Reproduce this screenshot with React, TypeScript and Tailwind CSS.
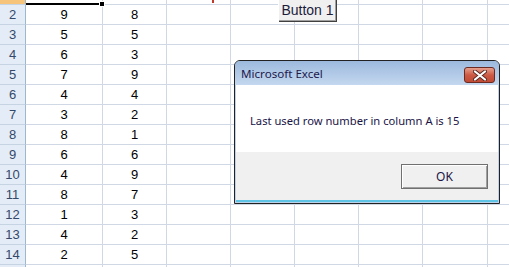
import React from "react";

const data: [number, number, number][] = [
  [2, 9, 8],
  [3, 5, 5],
  [4, 6, 3],
  [5, 7, 9],
  [6, 4, 4],
  [7, 3, 2],
  [8, 8, 1],
  [9, 6, 6],
  [10, 4, 9],
  [11, 8, 7],
  [12, 1, 3],
  [13, 4, 2],
  [14, 2, 5],
];

function EmptyCells() {
  return (
    <>
      <div className="w-[64px] shrink-0 border-r border-b border-[#d0d7e5]" />
      <div className="w-[64px] shrink-0 border-r border-b border-[#d0d7e5]" />
      <div className="w-[64px] shrink-0 border-r border-b border-[#d0d7e5]" />
      <div className="w-[64px] shrink-0 border-r border-b border-[#d0d7e5]" />
      <div className="w-[65px] shrink-0 border-r border-b border-[#d0d7e5]" />
      <div className="flex-1 border-b border-[#d0d7e5]" />
    </>
  );
}

export default function App() {
  return (
    <div
      className="relative w-[509px] h-[267px] overflow-hidden bg-white text-[12px] text-black"
      style={{ fontFamily: '"Liberation Sans", Arial, sans-serif' }}
    >
      {/* Row 1 (mostly scrolled off) */}
      <div className="flex h-[5px]">
        <div className="w-[26px] shrink-0 bg-[#f7c47c] border-r border-b border-r-[#9eb6ce] border-b-[#c6d3e3]" />
        <div className="w-[77px] shrink-0 border-r border-[#d0d7e5] border-b-2 border-b-black" />
        <div className="w-[64px] shrink-0 border-r border-b border-[#d0d7e5]" />
        <div className="w-[64px] shrink-0 border-r border-b border-[#d0d7e5] flex">
          <div className="ml-[45px] w-[2px] h-[3px] bg-[#c0392b]" />
        </div>
        <div className="w-[64px] shrink-0 border-r border-b border-[#d0d7e5]" />
        <div className="w-[64px] shrink-0 border-r border-b border-[#d0d7e5]" />
        <div className="w-[64px] shrink-0 border-r border-b border-[#d0d7e5]" />
        <div className="w-[65px] shrink-0 border-r border-b border-[#d0d7e5]" />
        <div className="flex-1 border-b border-[#d0d7e5]" />
      </div>

      {data.map(([n, a, b]) => (
        <div key={n} className="flex h-[20px]">
          <div className="w-[26px] shrink-0 bg-[#e4ecf7] border-r border-b border-r-[#9eb6ce] border-b-[#c6d3e3] flex items-end justify-center pb-[3px] text-[13px] leading-none text-[#34496a]">
            {n}
          </div>
          <div className="w-[77px] shrink-0 border-r border-b border-[#d0d7e5] flex items-end justify-center pb-[3px] text-[13px] leading-none">
            {a}
          </div>
          <div className="w-[64px] shrink-0 border-r border-b border-[#d0d7e5] flex items-end justify-center pb-[3px] text-[13px] leading-none">
            {b}
          </div>
          <EmptyCells />
        </div>
      ))}

      {/* Row 15 partial */}
      <div className="flex h-[3px]">
        <div className="w-[26px] shrink-0 bg-[#e4ecf7] border-r border-r-[#9eb6ce]" />
        <div className="w-[77px] shrink-0 border-r border-[#d0d7e5]" />
        <div className="w-[64px] shrink-0 border-r border-[#d0d7e5]" />
        <div className="w-[64px] shrink-0 border-r border-[#d0d7e5]" />
        <div className="w-[64px] shrink-0 border-r border-[#d0d7e5]" />
        <div className="w-[64px] shrink-0 border-r border-[#d0d7e5]" />
        <div className="w-[64px] shrink-0 border-r border-[#d0d7e5]" />
        <div className="w-[65px] shrink-0 border-r border-[#d0d7e5]" />
      </div>

      {/* Fill handle */}
      <div className="absolute left-[99px] top-[1px] w-[6px] h-[6px] bg-black border border-white" />

      {/* Button 1 */}
      <div className="absolute left-[278px] top-[-5px] w-[58px] h-[26px] bg-[#f0f0f0] border-t border-l border-white shadow-[1px_1px_0_#404040,inset_-1px_-1px_0_#a0a0a0] flex items-end justify-center pb-[4px] text-[14px] leading-none text-[#1c1c3c]">
        Button 1
      </div>

      {/* Message box */}
      <div
        className="absolute left-[234px] top-[60px] w-[266px] h-[144px] rounded-t-[6px] border border-[#222] bg-[#bcd1ea] flex flex-col"
        style={{ fontFamily: '"Noto Sans", "Open Sans", sans-serif' }}
      >
        <div className="h-[24px] rounded-t-[5px] bg-gradient-to-b from-[#9cb9dd] to-[#c4d8ef] flex items-center justify-between pl-[6px] pr-[4px]">
          <span className="text-[11.6px] text-[#1d1a4e] pt-[1px]">Microsoft Excel</span>
          <div className="w-[31px] h-[16px] mt-[4px] rounded-[3px] border border-[#6b2a22] bg-gradient-to-b from-[#e6a08e] via-[#cc5a45] to-[#c14a34] flex items-center justify-center">
            <svg width="14" height="11" viewBox="0 0 14 11">
              <path d="M2 1.5 L12 9.5 M12 1.5 L2 9.5" stroke="#5a2a24" strokeWidth="4" strokeLinecap="round" />
              <path d="M2 1.5 L12 9.5 M12 1.5 L2 9.5" stroke="#ffffff" strokeWidth="2.2" strokeLinecap="round" />
            </svg>
          </div>
        </div>
        <div className="flex-1 mx-[1px] mb-[1px] border-b-2 border-[#5fc3e6] flex flex-col">
          <div className="h-[67px] bg-white flex items-center pl-[14px] pt-[6px] text-[11.2px] text-[#1a1446]">
            Last used row number in column A is 15
          </div>
          <div className="flex-1 bg-[#f0f0f0] flex justify-end items-start pt-[12px] pr-[10px]">
            <div className="w-[87px] h-[25px] border border-[#707070] bg-[#f0f0f0] shadow-[inset_1px_1px_0_#ffffff,inset_-1px_-1px_0_#a0a0a0] flex items-center justify-center text-[12px] text-[#1a1446]">
              OK
            </div>
          </div>
        </div>
      </div>
    </div>
  );
}
